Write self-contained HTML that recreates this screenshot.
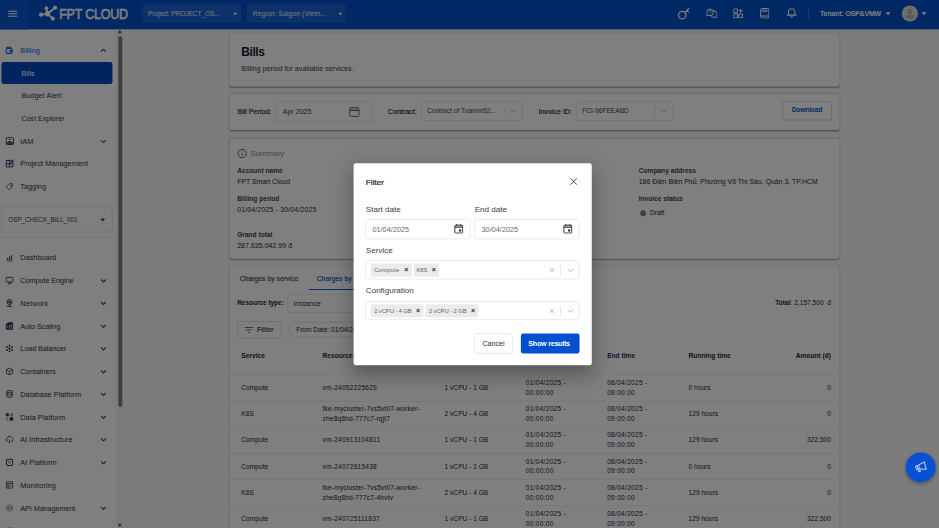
<!DOCTYPE html>
<html lang="en">
<head>
<meta charset="utf-8">
<title>Bills - FPT Cloud</title>
<style>
*{box-sizing:border-box;margin:0;padding:0}
html,body{width:939px;height:528px;overflow:hidden;background:#f4f5f7}
body{font-family:"Liberation Sans",sans-serif;color:#1c2340}
#stage{position:absolute;left:0;top:0;width:1920px;height:1080px;transform:scale(0.489063);transform-origin:0 0;overflow:hidden;background:#f9f9fa}
.abs{position:absolute}
svg{display:block}
/* header */
#hdr{position:absolute;left:0;top:0;width:1920px;height:60px;background:#0050c8;color:#fff}
#hdr .burger{position:absolute;left:0;top:0;width:56px;height:60px;background:#0a58d0}
#hdr .dd{position:absolute;top:9px;height:37px;background:#1a62d3;border-radius:4px;font-size:13.5px;color:#f2f5fc;line-height:37px;padding-left:12px;white-space:nowrap}
#hdr .dd i{position:absolute;right:7.5px;top:16.5px;border:4.5px solid transparent;border-top:5.5px solid #fff;border-bottom:0}
/* sidebar */
#side{position:absolute;left:0;top:0;width:238px;height:1080px;background:#fff}
.mi{position:absolute;left:0;width:238px;height:46px;font-size:15px;color:#2a3350;line-height:46px;white-space:nowrap}
.mi .ic{position:absolute;left:11px;top:14px;width:17px;height:17px}
.mi .tx{position:absolute;left:41.5px;top:0}
.mi .ch{position:absolute;left:205px;top:19px;width:13px;height:8px}
.sub{position:absolute;left:3px;width:227px;height:45px;border-radius:5px;font-size:14.5px;line-height:47px;padding-left:41px;color:#2a3350;white-space:nowrap}
.sub.act{background:#0048c0;color:#fff}
/* cards */
.card{position:absolute;left:469px;width:1247.5px;background:#fff;border-radius:5px;box-shadow:0 1px 3px rgba(0,0,0,.2),0 2px 2px rgba(0,0,0,.14),0 0 2px rgba(0,0,0,.07)}
.lbl{position:absolute;font-weight:bold;font-size:13.5px;color:#3a3f55;white-space:nowrap}
.val{position:absolute;font-size:14px;color:#1c2340;white-space:nowrap}
.sel{position:absolute;border:1px solid #cbcfd7;border-radius:5px;background:#fff;font-size:13.5px;color:#3a3f55;white-space:nowrap}
.sel .sep{position:absolute;top:9px;bottom:9px;width:1px;background:#cfd2d8}
.sel .cv{position:absolute;top:50%;margin-top:-4px;width:13px;height:8px}
/* table */
.th{position:absolute;top:710px;font-weight:bold;font-size:13.5px;color:#1c2340;white-space:nowrap;line-height:20px}
.row{position:absolute;left:469.5px;width:1247px;height:53.6px;border-top:1px solid #dfe1e6}
.td{position:absolute;font-size:13.5px;color:#1c2340;line-height:20px;white-space:nowrap;top:50%;transform:translateY(-50%)}
/* overlay + modal */
#ovl{position:absolute;left:0;top:0;width:1920px;height:1080px;background:rgba(0,0,0,.5)}
#modal{position:absolute;left:723px;top:334px;width:487px;height:413px;background:#fff;border-radius:5px;box-shadow:0 11px 15px -7px rgba(0,0,0,.2),0 24px 38px 3px rgba(0,0,0,.14),0 9px 46px 8px rgba(0,0,0,.12);color:#333}
#modal .ml{position:absolute;left:25px;font-size:16.5px;color:#404040;white-space:nowrap}
#modal .inp{position:absolute;border:1px solid #d6d6d6;border-radius:5px;background:#fff}
.chip{position:absolute;top:5.5px;height:27px;background:#ebebeb;border-radius:3px;font-size:12px;line-height:27px;color:#666;padding-left:7px;letter-spacing:-.2px;white-space:nowrap}
.chip b{position:absolute;right:6.5px;top:-.5px;font-size:14.5px;color:#2a2a2a;letter-spacing:0}
#fab{position:absolute;left:1852px;top:925px;width:61px;height:61px;border-radius:50%;background:#0a50d2;box-shadow:0 3px 8px rgba(0,0,0,.35)}
</style>
</head>
<body>
<div id="stage">

<!-- SIDEBAR -->
<div id="side">
<div class="mi" style="top:79.5px;color:#0a5fe0"><svg class="ic" style="left:10.500px;top:15.500px;width:15.500px;height:15.500px" viewBox="0 0 17 17" fill="none" stroke="#0a5fe0" stroke-width="2.600"><rect x="1.500" y="4.500" width="14" height="11" rx="2.500"/><path d="M3 4.500V3.500a2 2 0 0 1 2-2H11l2.500 3"/><path d="M9.500 8.500h6v3.500h-6z" fill="#0a5fe0" stroke-width="1"/></svg><span class="tx" id="mi1">Billing</span><svg class="ch" viewBox="0 0 13 8" fill="none" stroke="#2f3a5f" stroke-width="2.200"><path d="M1.500 6.500l5-5 5 5"/></svg></div>
<div class="mi" style="top:265.5px"><svg class="ic" style="left:10.500px;width:18px" viewBox="0 0 18 17" fill="none" stroke="#2f3a5f" stroke-width="1.900"><rect x="1.500" y="1.500" width="15" height="14" rx="2.500"/><path d="M1.500 11.500h15" stroke-width="1.700"/><circle cx="9" cy="5.300" r="1.700" fill="#2f3a5f" stroke="none"/><path d="M5.500 10.500c.5-3 6.500-3 7 0z" fill="#2f3a5f" stroke="none"/><path d="M2 14h14" stroke-width="2.400"/></svg><span class="tx" id="mi2">IAM</span><svg class="ch" viewBox="0 0 13 8" fill="none" stroke="#2f3a5f" stroke-width="2.2"><path d="M1.500 1.500l5 5 5-5"/></svg></div>
<div class="mi" style="top:312px"><svg class="ic" style="left:10.500px;width:18px" viewBox="0 0 18 17" fill="none" stroke="#2f3a5f" stroke-width="2.200"><rect x="1.500" y="2" width="14" height="13.500" rx="1.500"/><path d="M8.500 2v13.500M1.500 8.700h14"/><path d="M13.500 0l4 4-4 4-4-4z" fill="#2f3a5f" stroke="#fff" stroke-width="1.200"/></svg><span class="tx" id="mi3">Project Management</span></div>
<div class="mi" style="top:358.5px"><svg class="ic" viewBox="0 0 17 17" fill="none" stroke="#2f3a5f" stroke-width="1.800"><path d="M8.500 2.500h5.500a1 1 0 0 1 1 1l-1.500 6-5.500 5a1 1 0 0 1-1.400 0L2 10a1 1 0 0 1 0-1.400z" stroke-width="1.500"/><circle cx="11.500" cy="6" r=".8" fill="#2f3a5f"/></svg><span class="tx" id="mi4">Tagging</span></div>
<div class="mi" style="top:504px"><svg class="ic" viewBox="0 0 17 17" fill="none" stroke="#2f3a5f" stroke-width="1.800"><path d="M4.500 9.500v4M8.500 6.500v7M12.500 4v9.500" stroke-width="2.300"/><path d="M2 15.800h13" stroke-width="1.500"/></svg><span class="tx" id="mi5">Dashboard</span></div>
<div class="mi" style="top:550.5px"><svg class="ic" viewBox="0 0 17 17" fill="none" stroke="#2f3a5f" stroke-width="1.800"><rect x="1.500" y="2" width="14" height="9.500" rx="1.500" stroke-width="2"/><path d="M8.500 11.500v3M5 15.200h7" stroke-width="2"/></svg><span class="tx" id="mi6" style="letter-spacing:-0.2px">Compute Engine</span><svg class="ch" viewBox="0 0 13 8" fill="none" stroke="#2f3a5f" stroke-width="2.2"><path d="M1.500 1.500l5 5 5-5"/></svg></div>
<div class="mi" style="top:597px"><svg class="ic" viewBox="0 0 17 17" fill="none" stroke="#2f3a5f" stroke-width="1.800"><circle cx="8.500" cy="6.500" r="5" stroke-width="2"/><circle cx="8.500" cy="6.500" r="1.800" fill="#2f3a5f"/><path d="M8.500 11.500v3M3 15.500h11" stroke-width="2"/></svg><span class="tx" id="mi7" style="letter-spacing:0.32px">Network</span><svg class="ch" viewBox="0 0 13 8" fill="none" stroke="#2f3a5f" stroke-width="2.2"><path d="M1.500 1.500l5 5 5-5"/></svg></div>
<div class="mi" style="top:643.5px"><svg class="ic" viewBox="0 0 17 17" fill="none" stroke="#2f3a5f" stroke-width="1.800"><path d="M1.500 15.500V5l5-3.500h8.500v14z" fill="#2f3a5f" stroke-width="1.400"/><path d="M8 15V7.500h4.500V15" stroke="#fff" stroke-width="1.300"/><path d="M4 8v5" stroke="#fff" stroke-width="1.300"/></svg><span class="tx" id="mi8" style="letter-spacing:-0.22px">Auto Scaling</span><svg class="ch" viewBox="0 0 13 8" fill="none" stroke="#2f3a5f" stroke-width="2.2"><path d="M1.500 1.500l5 5 5-5"/></svg></div>
<div class="mi" style="top:690px"><svg class="ic" viewBox="0 0 17 17" fill="none" stroke="#2f3a5f" stroke-width="1.800"><circle cx="8.500" cy="8.500" r="1.600" fill="#2f3a5f"/><g fill="#2f3a5f" stroke="none"><circle cx="8.500" cy="2.500" r="2"/><circle cx="8.500" cy="14.500" r="2"/><circle cx="3.300" cy="5.500" r="2"/><circle cx="13.700" cy="5.500" r="2"/><circle cx="3.300" cy="11.500" r="2"/><circle cx="13.700" cy="11.500" r="2"/></g></svg><span class="tx" id="mi9" style="letter-spacing:-0.24px">Load Balancer</span><svg class="ch" viewBox="0 0 13 8" fill="none" stroke="#2f3a5f" stroke-width="2.2"><path d="M1.500 1.500l5 5 5-5"/></svg></div>
<div class="mi" style="top:736.5px"><svg class="ic" viewBox="0 0 17 17" fill="none" stroke="#2f3a5f" stroke-width="1.800"><path d="M8.500 1.500l6.500 3.500v7l-6.500 3.500L2 12V5z" stroke-width="1.800"/><path d="M2 5l6.500 3.500L15 5M8.500 8.500v7" stroke-width="1.600"/></svg><span class="tx" id="mi10">Containers</span><svg class="ch" viewBox="0 0 13 8" fill="none" stroke="#2f3a5f" stroke-width="2.2"><path d="M1.500 1.500l5 5 5-5"/></svg></div>
<div class="mi" style="top:783px"><svg class="ic" viewBox="0 0 17 17" fill="none" stroke="#2f3a5f" stroke-width="1.800"><ellipse cx="8.500" cy="4" rx="5.500" ry="2.500" stroke-width="2"/><path d="M3 4v9c0 1.400 2.500 2.500 5.500 2.500s5.500-1.100 5.500-2.500V4M3 8.500c0 1.400 2.500 2.500 5.500 2.500s5.500-1.100 5.500-2.500" stroke-width="2"/></svg><span class="tx" id="mi11">Database Platform</span><svg class="ch" viewBox="0 0 13 8" fill="none" stroke="#2f3a5f" stroke-width="2.2"><path d="M1.500 1.500l5 5 5-5"/></svg></div>
<div class="mi" style="top:829.5px"><svg class="ic" viewBox="0 0 17 17" fill="none" stroke="#2f3a5f" stroke-width="1.800"><rect x="1.500" y="1.500" width="5" height="5" rx="1" fill="#2f3a5f"/><circle cx="12.500" cy="4" r="2.200" stroke-width="1.500"/><rect x="9.500" y="9.500" width="6" height="6" rx="1.500" fill="#2f3a5f"/><path d="M2.500 10v2.500a2 2 0 0 0 2 2H6" stroke-width="1.500"/></svg><span class="tx" id="mi12">Data Platform</span><svg class="ch" viewBox="0 0 13 8" fill="none" stroke="#2f3a5f" stroke-width="2.2"><path d="M1.500 1.500l5 5 5-5"/></svg></div>
<div class="mi" style="top:876px"><svg class="ic" viewBox="0 0 17 17" fill="none" stroke="#2f3a5f" stroke-width="1.800"><path d="M5 12.500H4.500a3.300 3.300 0 0 1-.5-6.500 4.700 4.700 0 0 1 9-1 3.800 3.800 0 0 1 0 7.500h-1" stroke-width="1.800"/><path d="M8.500 8.500v7M6.300 13.500l2.200 2.200 2.200-2.200" stroke-width="1.600"/></svg><span class="tx" id="mi13">AI Infrastructure</span><svg class="ch" viewBox="0 0 13 8" fill="none" stroke="#2f3a5f" stroke-width="2.2"><path d="M1.500 1.500l5 5 5-5"/></svg></div>
<div class="mi" style="top:922.5px"><svg class="ic" viewBox="0 0 17 17" fill="none" stroke="#2f3a5f" stroke-width="1.800"><rect x="2" y="2" width="13" height="13" rx="4" stroke-width="2.200"/><path d="M6 8.800c1 1.600 4 1.600 5 0" stroke-width="1.500"/><path d="M6 6.300h.01M11 6.300h.01" stroke-width="1.800" stroke-linecap="round"/></svg><span class="tx" id="mi14">AI Platform</span><svg class="ch" viewBox="0 0 13 8" fill="none" stroke="#2f3a5f" stroke-width="2.2"><path d="M1.500 1.500l5 5 5-5"/></svg></div>
<div class="mi" style="top:969px"><svg class="ic" viewBox="0 0 17 17" fill="none" stroke="#2f3a5f" stroke-width="1.800"><rect x="2" y="2" width="13" height="13" rx="1.500" stroke-width="1.800"/><path d="M2 6h13" stroke-width="1.800"/><path d="M5 9h3v3.500H5zM10.500 9.500h2" stroke-width="1.400"/></svg><span class="tx" id="mi15" style="letter-spacing:0.3px">Monitoring</span></div>
<div class="mi" style="top:1015.5px"><svg class="ic" viewBox="0 0 17 17" fill="none" stroke="#2f3a5f" stroke-width="1.800"><path d="M8.500 1.500l6 3.500v7l-6 3.500-6-3.500V5z" stroke-width="1.300" stroke="#6a7186"/><circle cx="8.500" cy="8.500" r="3" stroke-width="1.300" stroke="#6a7186"/><path d="M2.500 8.500h12" stroke-width="1.100" stroke="#6a7186"/></svg><span class="tx" id="mi16" style="letter-spacing:-0.25px">API Management</span><svg class="ch" viewBox="0 0 13 8" fill="none" stroke="#2f3a5f" stroke-width="2.2"><path d="M1.500 1.500l5 5 5-5"/></svg></div>
<div class="mi" style="top:1063.500px"><svg class="ic" viewBox="0 0 17 17" fill="none" stroke="#2f3a5f" stroke-width="1.800"><rect x="1.500" y="2" width="14" height="9" rx="1.500" stroke-width="2"/></svg></div>
<div class="sub act" style="top:126.500px"><span id="sb1">Bills</span></div>
<div class="sub" style="top:173px"><span id="sb2" style="letter-spacing:.25px">Budget Alert</span></div>
<div class="sub" style="top:219.500px"><span id="sb3">Cost Explorer</span></div>
<div class="abs" style="left:3px;top:422px;width:227px;height:53px;border:1px solid #c9ccd3;border-radius:5px;font-size:13px;line-height:51px;padding-left:13px;letter-spacing:-.1px;color:#2f3a5f;white-space:nowrap"><span id="ospsel">OSP_CHECK_BILL_001</span><i class="abs" style="right:14px;top:24px;border:5px solid transparent;border-top:6px solid #2f3a5f;border-bottom:0"></i></div>
<div class="abs" style="left:3px;top:484px;width:227px;height:1px;background:#e3e5ea"></div>
<div class="abs" style="left:238px;top:60px;width:15px;height:1020px;background:#f4f4f5"></div>
<div class="abs" style="left:241.500px;top:74px;width:8.500px;height:758px;border-radius:5px;background:#7d7d7d"></div>
<i class="abs" style="left:241px;top:61px;border:4.500px solid transparent;border-bottom:7px solid #555;border-top:0"></i>
<i class="abs" style="left:241px;top:1071px;border:4.500px solid transparent;border-top:7px solid #555;border-bottom:0"></i>
</div>

<!-- MAIN -->
<div id="main">
<div class="card" style="top:69px;height:107.500px"><div class="abs" id="h1" style="left:24.500px;top:21.500px;font-size:24.500px;line-height:32px;font-weight:bold;color:#141b38;white-space:nowrap;letter-spacing:-.9px">Bills</div><div class="abs" id="sub1" style="left:24.500px;top:61.500px;font-size:14.700px;line-height:20px;color:#2f3a5f;white-space:nowrap">Billing period for available services.</div></div>
<div class="card" style="top:191px;height:75px"><div class="lbl" id="l_bp" style="left:16.5px;top:27px;line-height:20px;font-size:14.500px;font-weight:normal;color:#1c2340;-webkit-text-stroke:.3px #1c2340">Bill Period:</div><div class="sel" style="left:95px;top:16.5px;width:197px;height:41px;line-height:39px;padding-left:13px;font-size:14.500px;color:#2f3a5f">Apr 2025<svg class="abs" style="left:147.500px;top:8px" width="23" height="23" viewBox="0 0 23 23" fill="none" stroke="#555b6b" stroke-width="1.800"><rect x="2" y="3.500" width="19" height="17.500" rx="2"/><path d="M2 8.500h19" stroke-width="2.600"/><path d="M7 1v4M16 1v4"/></svg></div><div class="lbl" id="l_ct" style="left:324px;top:27px;line-height:20px;font-size:14.500px;font-weight:normal;color:#1c2340;-webkit-text-stroke:.3px #1c2340">Contract:</div><div class="sel" style="left:392px;top:16.5px;width:207.500px;height:39px;line-height:35.500px;padding-left:11px"><span id="v_ct">Contract of Tuannn52...</span><span class="sep" style="left:170px"></span><svg class="cv" style="left:181px" viewBox="0 0 13 8" fill="none" stroke="#9aa0ad" stroke-width="1.600"><path d="M1.500 1.500l5 5 5-5"/></svg></div><div class="lbl" id="l_iv" style="left:632px;top:27px;line-height:20px;font-size:14.500px;font-weight:normal;color:#1c2340;-webkit-text-stroke:.3px #1c2340">Invoice ID:</div><div class="sel" style="left:709.5px;top:16.5px;width:197.500px;height:39px;line-height:35.500px;padding-left:11px"><span id="v_iv">FCI-96FEEABD</span><span class="sep" style="left:160px"></span><svg class="cv" style="left:171px" viewBox="0 0 13 8" fill="none" stroke="#9aa0ad" stroke-width="1.600"><path d="M1.500 1.500l5 5 5-5"/></svg></div><div class="abs" id="dl" style="left:1130.5px;top:16px;width:101px;height:38.500px;border:1px solid #8fb0e8;border-radius:5px;text-align:center;line-height:36px;font-size:13.700px;font-weight:bold;color:#0a55d0;letter-spacing:-.35px">Download</div></div>
<div class="card" style="top:283px;height:246px"><svg class="abs" style="left:16px;top:21px" width="20" height="20" viewBox="0 0 20 20" fill="none" stroke="#444" stroke-width="1.700"><circle cx="10" cy="10" r="8.500"/><path d="M10 9v5.500M10 5.500v1.800"/></svg><div class="abs" id="sumt" style="left:43px;top:17.5px;font-size:16.200px;line-height:22px;color:#8b8e97;white-space:nowrap">Summary</div><div class="lbl" id="al" style="left:16px;top:57px;line-height:18px">Account name</div><div class="val" id="av" style="left:16px;top:78px;line-height:20px">FPT Smart Cloud</div><div class="lbl" id="bl" style="left:16px;top:115px;line-height:18px">Billing period</div><div class="val" id="bv" style="letter-spacing:.42px;left:16px;top:136px;line-height:20px">01/04/2025 - 30/04/2025</div><div class="lbl" id="gl" style="left:16px;top:188.5px;line-height:18px">Grand total</div><div class="val" id="gv" style="letter-spacing:.2px;left:16px;top:209.5px;line-height:20px">287.635.042.99 đ</div><div class="lbl" id="cl" style="left:837px;top:57px;line-height:18px">Company address</div><div class="val" id="cv" style="letter-spacing:.08px;left:837px;top:78px;line-height:20px">186 Điện Biên Phủ, Phường Võ Thị Sáu, Quận 3, TP.HCM</div><div class="lbl" id="isl" style="left:837px;top:115px;line-height:18px">Invoice status</div><div class="abs" style="left:839.5px;top:146.5px;width:12px;height:12px;border-radius:50%;background:#7a7d8c"></div><div class="val" id="draft" style="left:860px;top:143px;line-height:20px;font-size:13.500px">Draft</div></div>
<div class="card" style="top:545.500px;height:560px"></div><div class="abs" id="tab1" style="left:490px;top:559px;font-size:14px;line-height:20px;color:#4a5068;-webkit-text-stroke:.4px #4a5068;white-space:nowrap">Charges by service</div><div class="abs" id="tab2" style="left:647.500px;top:559px;font-size:14px;line-height:20px;color:#0a55d0;white-space:nowrap;-webkit-text-stroke:.3px #0a55d0">Charges by resource</div><div class="abs" style="left:632px;top:590.500px;width:170px;height:2.500px;background:#0a55d0"></div><div class="lbl" id="rtl" style="left:485px;top:609.500px;line-height:20px;font-size:13.200px;color:#1c2340">Resource type:</div><div class="sel" style="left:587.500px;top:602px;width:250px;height:37px;line-height:35px;padding-left:11px;font-size:15px;color:#2f3a5f">Instance</div><div class="abs" id="total" style="left:1500px;width:199px;text-align:right;top:609.500px;font-size:13.500px;line-height:20px;color:#1c2340;white-space:nowrap"><b>Total</b>: 2,157,500 &nbsp;đ</div><div class="abs" style="left:485px;top:656.500px;width:89.500px;height:35px;border:1px solid #c3c7cf;border-radius:5px"><svg class="abs" style="left:14px;top:10.500px" width="18" height="13" viewBox="0 0 18 13" fill="none" stroke="#4a5068" stroke-width="1.800"><path d="M0 1.500h18M3.500 6.500h11M7 11.500h4"/></svg><span class="abs" id="filt" style="left:39.500px;top:6.500px;font-size:14px;line-height:20px;font-weight:bold;color:#4a5068">Filter</span></div><div class="abs" style="left:592px;top:657.500px;width:330px;height:32px;border:1px solid #b9bdc6;border-radius:16px;font-size:13.500px;line-height:30px;padding-left:12.500px;color:#1c2340;white-space:nowrap">From Date: 01/04/2025 - To Date: 30/04/2025</div><div class="th" id="th0" style="left:493.5px;top:717px">Service</div><div class="th" id="th1" style="left:659.5px;top:717px">Resource</div><div class="th" id="th2" style="left:909px;top:717px">Configuration</div><div class="th" id="th3" style="left:1075px;top:717px">Start time</div><div class="th" id="th4" style="left:1241.5px;top:717px">End time</div><div class="th" id="th5" style="left:1408px;top:717px">Running time</div><div class="th" id="th6" style="left:1500px;width:199px;text-align:right;top:717px">Amount (đ)</div><div class="row" style="top:765.9px"><div class="td" style="left:24.0px">Compute</div><div class="td" style="left:190px;letter-spacing:.45px">vm-24052225629</div><div class="td" style="left:439.5px">1 vCPU - 1 GB</div><div class="td" style="left:605.5px;letter-spacing:.55px">01/04/2025 -<br>00:00:00</div><div class="td" style="left:772px;letter-spacing:.55px">08/04/2025 -<br>09:00:00</div><div class="td" style="left:938.5px">0 hours</div><div class="td" style="left:1030.500px;width:199px;text-align:right">0</div></div><div class="row" style="top:819.5px"><div class="td" style="left:24.0px">K8S</div><div class="td" style="left:190px;letter-spacing:.35px">fke-mycluster-7vs5vt07-worker-<br>zhe8q8hd-777c7-rqjt7</div><div class="td" style="left:439.5px">2 vCPU - 4 GB</div><div class="td" style="left:605.5px;letter-spacing:.55px">01/04/2025 -<br>00:00:00</div><div class="td" style="left:772px;letter-spacing:.55px">08/04/2025 -<br>09:00:00</div><div class="td" style="left:938.5px">129 hours</div><div class="td" style="left:1030.500px;width:199px;text-align:right">0</div></div><div class="row" style="top:873.1px"><div class="td" style="left:24.0px">Compute</div><div class="td" style="left:190px;letter-spacing:.45px">vm-240913104811</div><div class="td" style="left:439.5px">1 vCPU - 1 GB</div><div class="td" style="left:605.5px;letter-spacing:.55px">01/04/2025 -<br>00:00:00</div><div class="td" style="left:772px;letter-spacing:.55px">08/04/2025 -<br>09:00:00</div><div class="td" style="left:938.5px">129 hours</div><div class="td" style="left:1030.500px;width:199px;text-align:right">322,500</div></div><div class="row" style="top:926.7px"><div class="td" style="left:24.0px">Compute</div><div class="td" style="left:190px;letter-spacing:.45px">vm-24072615438</div><div class="td" style="left:439.5px">1 vCPU - 1 GB</div><div class="td" style="left:605.5px;letter-spacing:.55px">01/04/2025 -<br>00:00:00</div><div class="td" style="left:772px;letter-spacing:.55px">08/04/2025 -<br>09:00:00</div><div class="td" style="left:938.5px">0 hours</div><div class="td" style="left:1030.500px;width:199px;text-align:right">0</div></div><div class="row" style="top:980.3px"><div class="td" style="left:24.0px">K8S</div><div class="td" style="left:190px;letter-spacing:.35px">fke-mycluster-7vs5vt07-worker-<br>zhe8q8hd-777c7-4hvtv</div><div class="td" style="left:439.5px">2 vCPU - 4 GB</div><div class="td" style="left:605.5px;letter-spacing:.55px">01/04/2025 -<br>00:00:00</div><div class="td" style="left:772px;letter-spacing:.55px">08/04/2025 -<br>09:00:00</div><div class="td" style="left:938.5px">129 hours</div><div class="td" style="left:1030.500px;width:199px;text-align:right">0</div></div><div class="row" style="top:1033.9px"><div class="td" style="left:24.0px">Compute</div><div class="td" style="left:190px;letter-spacing:.45px">vm-240725111837</div><div class="td" style="left:439.5px">1 vCPU - 1 GB</div><div class="td" style="left:605.5px;letter-spacing:.55px">01/04/2025 -<br>00:00:00</div><div class="td" style="left:772px;letter-spacing:.55px">08/04/2025 -<br>09:00:00</div><div class="td" style="left:938.5px">129 hours</div><div class="td" style="left:1030.500px;width:199px;text-align:right">322,500</div></div>
</div>

<!-- HEADER -->
<div id="hdr">
<div class="burger"><svg class="abs" style="left:13.5px;top:15.5px" width="24" height="24" viewBox="0 0 24 24"><path d="M3 6h18v2H3zM3 11h18v2H3zM3 16h18v2H3z" fill="#fff"/></svg></div>
<svg class="abs" style="left:79px;top:11px" width="40" height="34" viewBox="0 0 40 34"><g stroke="#fff" stroke-width="3.600" fill="none" stroke-linecap="round"><path d="M18.300 17.200 L5 19M18.300 17.200 L15.900 6M18.300 17.200 L33.500 4.800M18.300 17.200 L28.800 27"/></g><g fill="#fff"><circle cx="18.300" cy="17.200" r="5.600"/><circle cx="4.800" cy="19" r="4.300"/><circle cx="15.900" cy="5.800" r="3.800"/><circle cx="33.700" cy="4.700" r="4.300"/><circle cx="29" cy="27.200" r="4.300"/></g></svg>
<div class="abs" id="logotx" style="left:120.500px;top:11px;font-size:30px;line-height:36px;color:#fff;white-space:nowrap;letter-spacing:-.5px;-webkit-text-stroke:1.100px #fff;transform:scaleX(.85);transform-origin:0 0">FPT CLOUD</div>
<div class="dd" style="left:290.5px;width:202px"><span id="ddp" style="letter-spacing:-.2px">Project: PROJECT_OS...</span><i></i></div>
<div class="dd" style="left:505px;width:202px"><span id="ddr" style="letter-spacing:.3px">Region: Saigon (Vietn...</span><i></i></div>
<!-- right icons -->
<svg class="abs" style="left:1385px;top:14.500px" width="26" height="26" viewBox="0 0 26 26" fill="none" stroke="#fff" stroke-width="2.600"><circle cx="10" cy="16" r="7.600"/><path d="M15.500 10.500 L23.500 2.500M19.500 6.500 L22.500 9.500" stroke-linecap="round"/></svg>
<svg class="abs" style="left:1443.500px;top:16.500px" width="23.500" height="21.600" viewBox="0 0 25 23" fill="none" stroke="#fff" stroke-width="2.200"><path d="M8.500 2a6.800 6.800 0 0 1 6.800 6.800 6.800 6.800 0 0 1-6.800 6.800H1.700V8.800A6.800 6.800 0 0 1 8.500 2z"/><path d="M14.500 5.800a6.500 6.500 0 0 1 8.800 6.200V19.500h-7.300a6.500 6.500 0 0 1-5.500-3.200"/><path d="M6.500 7a2 2 0 1 1 2.800 1.800c-.6.300-.8.700-.8 1.300M8.500 12.300v.6" stroke-width="1.700"/></svg>
<svg class="abs" style="left:1499px;top:16.500px" width="21.500" height="21.500" viewBox="0 0 23 23" fill="none" stroke="#fff" stroke-width="2.200"><rect x="1.500" y="1.500" width="8" height="8" rx="1"/><rect x="1.500" y="12.500" width="8" height="8" rx="1"/><rect x="12.500" y="12.500" width="8" height="8" rx="1"/><path d="M16.500 1.500v8M12.500 5.500h8"/></svg>
<svg class="abs" style="left:1553.500px;top:15.500px" width="19.500" height="22.300" viewBox="0 0 21 24" fill="none" stroke="#fff" stroke-width="2.200"><rect x="1.500" y="1.500" width="18" height="21" rx="2.500"/><path d="M2 18h17"/><path d="M5.500 5h10v3h-10z" stroke-width="1.800"/></svg>
<svg class="abs" style="left:1607.500px;top:14.500px" width="21.500" height="22.500" viewBox="0 0 23 24" fill="none" stroke="#fff" stroke-width="2.200"><path d="M4.500 16.500V10a7 7 0 0 1 14 0v6.500M1.500 17h20" stroke-linecap="round"/><path d="M8.500 20l3 2.500 3-2.500z" fill="#fff" stroke-width="1"/></svg>
<div class="abs" style="left:1651.500px;top:15px;width:1.500px;height:24px;background:#9fb4dc"></div>
<div class="abs" id="tenant" style="left:1676.500px;top:17px;font-size:14.500px;line-height:20px;font-weight:bold;color:#fff;white-space:nowrap;letter-spacing:-.45px">Tenant: OSP&amp;VMW</div>
<i class="abs" style="left:1810.500px;top:25px;border:5px solid transparent;border-top:6px solid #fff;border-bottom:0"></i>
<div class="abs" style="left:1844px;top:11px;width:33px;height:33px;border-radius:50%;background:#dedede;overflow:hidden"><div class="abs" style="left:11px;top:6.500px;width:11px;height:11px;border-radius:50%;background:#b9b9b9"></div><div class="abs" style="left:7.500px;top:19px;width:18px;height:9px;border-radius:5px 5px 7px 7px;background:#b9b9b9"></div></div>
<i class="abs" style="left:1883.500px;top:25px;border:5px solid transparent;border-top:6px solid #fff;border-bottom:0"></i>
</div>

<div id="ovl"></div>

<!-- MODAL -->
<div id="modal">
<div class="abs" id="mtitle" style="left:25px;top:27px;font-size:16.500px;line-height:22px;color:#2b2b2b;-webkit-text-stroke:.5px #2b2b2b;letter-spacing:.1px">Filter</div>
<svg class="abs" style="left:442px;top:29px" width="16" height="16" viewBox="0 0 12 12" fill="none" stroke="#333" stroke-width="1.35"><path d="M1 1l10 10M11 1L1 11"/></svg>
<div class="ml" id="ml1" style="top:82.500px;line-height:22px">Start date</div>
<div class="ml" id="ml2" style="left:247.500px;top:82.500px;line-height:22px">End date</div>
<div class="inp" style="left:24px;top:114px;width:215px;height:40.500px"><span class="abs" id="in1" style="left:13.500px;top:9.500px;font-size:15px;line-height:20px;color:#6b6b6b">01/04/2025</span><svg class="abs" style="left:179.500px;top:8px" width="20" height="21" viewBox="0 0 20 21" fill="none" stroke="#333" stroke-width="2"><rect x="2" y="3.500" width="16" height="16" rx="1.500"/><path d="M2 7.500h16" stroke-width="2.500"/><path d="M6 1v3.500M14 1v3.500"/><rect x="10.500" y="12" width="4.500" height="4.500" fill="#333" stroke="none"/></svg></div>
<div class="inp" style="left:247px;top:114px;width:215px;height:40.500px"><span class="abs" id="in2" style="left:13.500px;top:9.500px;font-size:15px;line-height:20px;color:#6b6b6b">30/04/2025</span><svg class="abs" style="left:179.500px;top:8px" width="20" height="21" viewBox="0 0 20 21" fill="none" stroke="#333" stroke-width="2"><rect x="2" y="3.500" width="16" height="16" rx="1.500"/><path d="M2 7.500h16" stroke-width="2.500"/><path d="M6 1v3.500M14 1v3.500"/><rect x="10.500" y="12" width="4.500" height="4.500" fill="#333" stroke="none"/></svg></div>
<div class="ml" id="ml3" style="top:166.500px;line-height:22px">Service</div>
<div class="inp" style="left:24px;top:198px;width:438px;height:39px"><div class="chip" id="ch1" style="letter-spacing:.45px;left:10px;width:83.500px">Compute<b>×</b></div><div class="chip" id="ch2" style="padding-left:5.500px;left:98px;width:52px">K8S<b>×</b></div><svg class="abs" style="left:375px;top:13.5px" width="11" height="11" viewBox="0 0 12 12" fill="none" stroke="#a8a8a8" stroke-width="1.700"><path d="M1 1l10 10M11 1L1 11"/></svg><span class="abs" style="left:398px;top:9px;width:1.200px;height:20px;background:#cdcdcd"></span><svg class="abs" style="left:412px;top:15.500px" width="13" height="8" viewBox="0 0 13 8" fill="none" stroke="#a8a8a8" stroke-width="1.800"><path d="M1.500 1.500l5 5 5-5"/></svg></div>
<div class="ml" id="ml4" style="top:248.500px;line-height:22px">Configuration</div>
<div class="inp" style="left:24px;top:281.500px;width:438px;height:38.500px"><div class="chip" id="ch3" style="left:10px;width:107.500px">2 vCPU - 4 GB<b>×</b></div><div class="chip" id="ch4" style="left:122px;width:108px">2 vCPU - 2 GB<b>×</b></div><svg class="abs" style="left:375px;top:13.5px" width="11" height="11" viewBox="0 0 12 12" fill="none" stroke="#a8a8a8" stroke-width="1.700"><path d="M1 1l10 10M11 1L1 11"/></svg><span class="abs" style="left:398px;top:9px;width:1.200px;height:20px;background:#cdcdcd"></span><svg class="abs" style="left:412px;top:15.500px" width="13" height="8" viewBox="0 0 13 8" fill="none" stroke="#a8a8a8" stroke-width="1.800"><path d="M1.500 1.500l5 5 5-5"/></svg></div>
<div class="abs" id="bcancel" style="left:246.500px;top:348px;width:79px;height:40.500px;border:1px solid #cfcfcf;border-radius:5px;text-align:center;line-height:38px;font-size:14.500px;color:#2b2b2b">Cancel</div>
<div class="abs" id="bshow" style="left:341.500px;top:348px;width:120.500px;height:40.500px;border-radius:5px;background:#0050d0;text-align:center;line-height:40px;font-size:14.500px;font-weight:bold;color:#fff;letter-spacing:-.45px;padding-right:4px">Show results</div>
</div>

<div id="fab"><svg class="abs" style="left:17px;top:17px" width="27" height="27" viewBox="0 0 27 27" fill="none" stroke="#fff" stroke-width="1.600" stroke-linejoin="round"><path d="M3 11.500l3.500-1.200 2 6.500L5 18z"/><path d="M6.500 10.300L21 2.500l4 15-16.500-.7"/><path d="M8 17.500l1.800 5.500 3.200-1-1.300-4.300"/><path d="M10 9.500l1.500 6" stroke-width="1.200"/></svg></div>

</div>
</body>
</html>
